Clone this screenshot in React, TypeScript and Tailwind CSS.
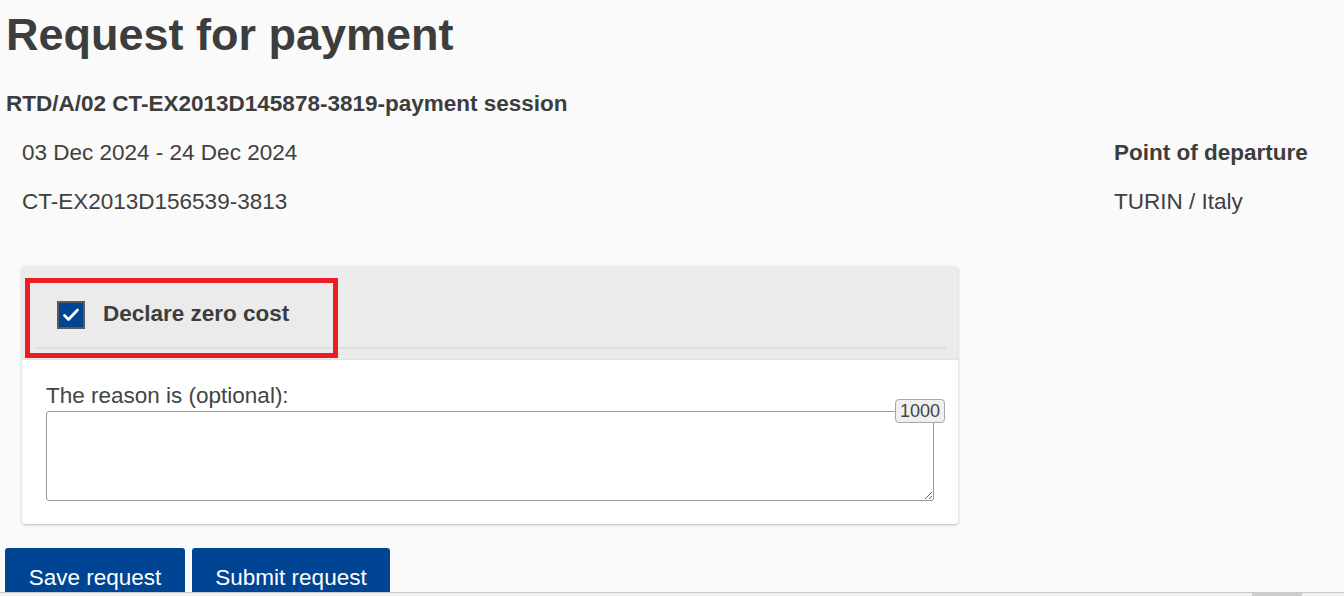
import React from 'react';

const font = { fontFamily: '"Liberation Sans", Arial, sans-serif' };

export default function App() {
    return (
        <div className="h-[596px] w-full flex flex-col bg-[#fafafa] text-[#404040] overflow-hidden" style={font}>
            <div className="flex-1 overflow-hidden">
                {/* Title */}
                <h1 className="pl-[6px] pt-[9px] text-[45px] leading-[52px] font-bold text-[#3d3d3d]">
                    Request for payment
                </h1>
                <div className="pl-[6px] mt-[30px] text-[22.5px] leading-[26px] font-bold text-[#3d3d3d]">
                    RTD/A/02 CT-EX2013D145878-3819-payment session
                </div>

                {/* Details */}
                <div className="flex mt-[23px] text-[22.5px] leading-[26px]">
                    <div className="flex-1 pl-[22px] flex flex-col gap-[23px]">
                        <span>03 Dec 2024 - 24 Dec 2024</span>
                        <span>CT-EX2013D156539-3813</span>
                    </div>
                    <div className="w-[230px] flex flex-col gap-[23px]">
                        <span className="font-bold text-[#3d3d3d]">Point of departure</span>
                        <span>TURIN / Italy</span>
                    </div>
                </div>

                {/* Zero cost card */}
                <div className="relative ml-[22px] mt-[51px] w-[936px] rounded-[4px] bg-white shadow-[0_1px_3px_rgba(0,0,0,0.25)] overflow-hidden">
                    <div className="bg-[#ebebeb] pt-[12px] pl-[13px] pr-[12px] pb-[10px] border-b border-[#e2e2e2]">
                        <div className="h-[71px] flex items-center pl-[22px] pt-[5px] border-b-[2px] border-[#dedede]">
                            <div className="w-[28px] h-[28px] bg-[#004494] border-[2px] border-[#5a5a5a] flex items-center justify-center">
                                <svg width="20" height="20" viewBox="0 0 20 20" fill="none">
                                    <path d="M3.5 10.5l4 4L16.5 5" stroke="white" strokeWidth="2.8" strokeLinecap="round" strokeLinejoin="round" />
                                </svg>
                            </div>
                            <span className="ml-[18px] mb-[2px] text-[22.5px] font-bold text-[#3d3d3d]">Declare zero cost</span>
                        </div>
                    </div>
                    {/* highlight */}
                    <div className="absolute left-[3px] top-[12px] w-[313px] h-[80px] border-[5px] border-[#ec1c24] pointer-events-none" />

                    <div className="pl-[24px] pr-[13px] pt-[23px] pb-[23px]">
                        <label className="block text-[22.5px] leading-[26px] text-[#444]">The reason is (optional):</label>
                        <div className="relative mt-[-10px] pt-[12px] pr-[11px]">
                            <textarea
                                className="block w-full h-[90px] border border-[#9a9a9a] rounded-[3px] bg-white resize-y outline-none"
                                defaultValue=""
                            />
                            <span className="absolute right-0 top-0 h-[24px] w-[50px] text-center text-[18px] leading-[22px] bg-[#efefef] border border-[#a8a8a8] rounded-[4px] text-[#444]">
                                1000
                            </span>
                        </div>
                    </div>
                </div>

                {/* Actions */}
                <div className="flex gap-[7px] pl-[5px] mt-[24px]">
                    <button className="h-[60px] w-[180px] bg-[#004494] text-white text-[22.5px] leading-[26px] rounded-t-[3px] flex justify-center items-start pt-[17px]">
                        Save request
                    </button>
                    <button className="h-[60px] w-[198px] bg-[#004494] text-white text-[22.5px] leading-[26px] rounded-t-[3px] flex justify-center items-start pt-[17px]">
                        Submit request
                    </button>
                </div>
            </div>

            {/* Horizontal scrollbar */}
            <div className="h-[4px] border-t border-[#c8c8c8] bg-[#f0f0f0] flex">
                <div className="ml-[1252px] w-[50px] bg-[#cdcdcd]" />
            </div>
        </div>
    );
}
